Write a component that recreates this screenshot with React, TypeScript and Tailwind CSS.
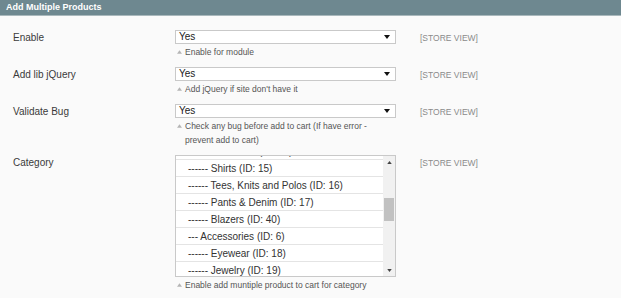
import React from 'react'

const categories = [
  '--- New Arrivals (ID: 14)',
  '------ Shirts (ID: 15)',
  '------ Tees, Knits and Polos (ID: 16)',
  '------ Pants & Denim (ID: 17)',
  '------ Blazers (ID: 40)',
  '--- Accessories (ID: 6)',
  '------ Eyewear (ID: 18)',
  '------ Jewelry (ID: 19)',
]

function Triangle({ up, className }: { up?: boolean; className?: string }) {
  return (
    <svg width="6" height="4" viewBox="0 0 6 4" className={className}>
      <polygon points={up ? '0,4 3,0 6,4' : '0,0 6,0 3,4'} fill="currentColor" />
    </svg>
  )
}

function Hint({ children }: { children: React.ReactNode }) {
  return (
    <div className="mt-[1px] flex items-start gap-[3px] pl-[2px] text-[8.5px] leading-[14px] text-[#555]">
      <Triangle up className="mt-[5px] shrink-0 text-[#b5b5b5] w-[5px] h-[4px]" />
      <span>{children}</span>
    </div>
  )
}

function Select({ value }: { value: string }) {
  return (
    <div className="flex h-[14px] items-center justify-between border border-[#c9c9c9] bg-white pl-[3px] pr-[5px] text-[10px] leading-none text-[#222]">
      <span>{value}</span>
      <Triangle className="text-[#111]" />
    </div>
  )
}

function Row({ label, children }: { label: string; children: React.ReactNode }) {
  return (
    <div className="flex items-start">
      <div className="w-[162px] shrink-0 pt-[1px] text-[10px] leading-[14px] text-[#3a3a3a]">{label}</div>
      <div className="w-[221px] shrink-0">{children}</div>
      <div className="ml-[24px] pt-[1px] text-[8.5px] leading-[14px] text-[#8a8a8a]">[STORE VIEW]</div>
    </div>
  )
}

export default function App() {
  return (
    <div className="h-[298px] w-[621px] overflow-hidden bg-[#fafafa] font-['Liberation_Sans',Arial,sans-serif]">
      <div className="h-[16px] border-b border-[#a9b8bc] bg-[#6e8890] pl-[6px] text-[9px] font-bold leading-[15px] text-white">
        Add Multiple Products
      </div>

      <div className="flex flex-col gap-[8px] pl-[13px] pt-[14px]">
        <Row label="Enable">
          <Select value="Yes" />
          <Hint>Enable for module</Hint>
        </Row>

        <Row label="Add lib jQuery">
          <Select value="Yes" />
          <Hint>Add jQuery if site don't have it</Hint>
        </Row>

        <Row label="Validate Bug">
          <Select value="Yes" />
          <Hint>
            Check any bug before add to cart (If have error -<br />
            prevent add to cart)
          </Hint>
        </Row>

        <Row label="Category">
          <div className="flex h-[122px] border border-[#c9c9c9] bg-white">
            <div className="flex-1 overflow-hidden">
              <div className="-mt-[13px]">
                {categories.map((c) => (
                  <div
                    key={c}
                    className="h-[17px] border-b border-[#e4e4e4] pl-[12px] text-[10px] leading-[17px] text-[#333]"
                  >
                    {c}
                  </div>
                ))}
              </div>
            </div>
            <div className="flex w-[12px] flex-col items-center bg-[#f1f1f1]">
              <div className="flex h-[12px] items-center justify-center">
                <Triangle up className="h-[3px] w-[5px] text-[#444]" />
              </div>
              <div className="mt-[30px] h-[23px] w-[10px] bg-[#c1c1c1]" />
              <div className="flex-1" />
              <div className="flex h-[12px] items-center justify-center">
                <Triangle className="h-[3px] w-[5px] text-[#444]" />
              </div>
            </div>
          </div>
          <Hint>Enable add muntiple product to cart for category</Hint>
        </Row>
      </div>
    </div>
  )
}
